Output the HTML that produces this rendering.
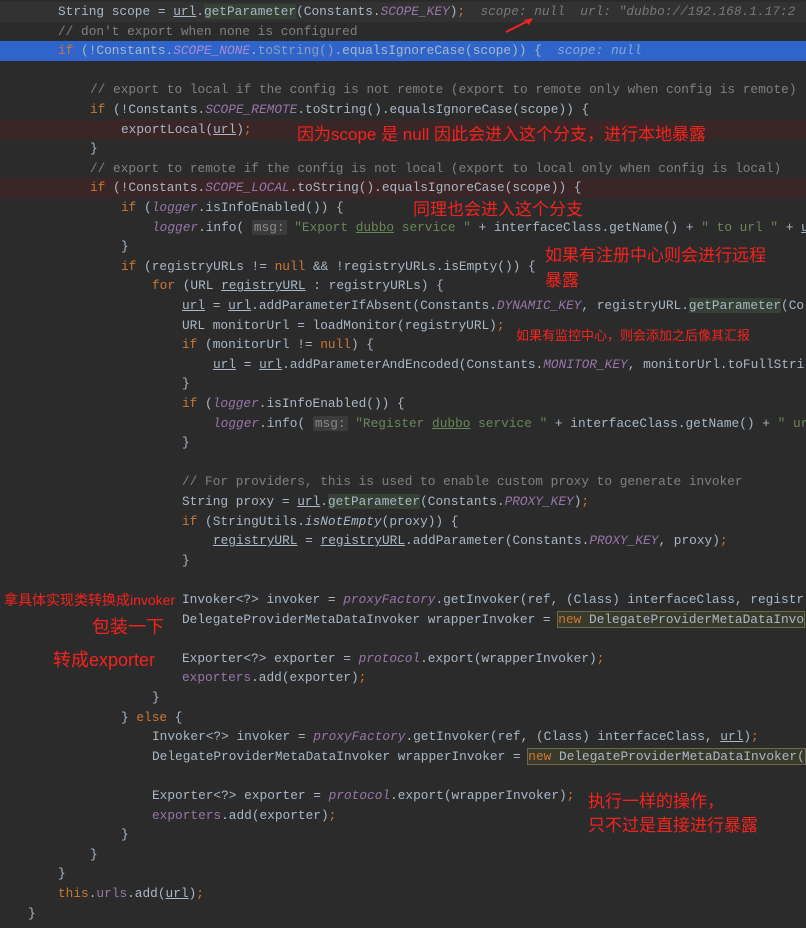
<!DOCTYPE html>
<html><head><meta charset="utf-8"><style>
body{margin:0;width:806px;height:928px;background:#2b2b2b;overflow:hidden;position:relative;font-family:"Liberation Mono",monospace;}
.l{position:absolute;left:0;width:806px;height:19.6px;line-height:19.6px;font-size:12.8px;color:#a9b7c6;white-space:pre;margin-top:1px}
.l span.c{position:absolute;}
.k{color:#cc7832}.cm{color:#808080}.f{color:#9876aa;font-style:italic}.s{color:#6a8759}.m{color:#ffc66d}
.h{color:#787878;font-style:italic}.u{text-decoration:underline}.p{color:#9876aa}
.it{font-style:italic}
.hint{background:#3b3b3b;color:#8a8a8a;border-radius:2px;padding:0 2px}
.a{position:absolute;color:#f5231e;font-family:"Liberation Sans","Noto Sans CJK SC",sans-serif;white-space:nowrap;}
.new{background:#3a3a2c;outline:1px solid #6b6b45}
</style></head><body>
<div class="l" style="top:1px;background:#323232"><span class="c" style="left:58px">String scope = <span class="u">url</span>.<span style="background:#344134">getParameter</span>(Constants.<span class="f">SCOPE_KEY</span>)<span class="k">;</span>  <span class="h">scope: null  url: "dubbo://192.168.1.17:2</span></span></div>
<div class="l" style="top:20.6px"><span class="c cm" style="left:58px">// don't export when none is configured</span></div>
<div class="l" style="top:40.2px;background:#2f65ca"><span class="c" style="left:58px"><span class="k">if</span> (!Constants.<span class="f" style="color:#a98ad0">SCOPE_NONE</span>.<span style="color:#8d9fb8">toString()</span>.equalsIgnoreCase(scope)) {  <span class="h" style="color:#8aa6d8">scope: null</span></span></div>
<div class="l" style="top:79.4px"><span class="c cm" style="left:90px">// export to local if the config is not remote (export to remote only when config is remote)</span></div>
<div class="l" style="top:99px"><span class="c" style="left:90px"><span class="k">if</span> (!Constants.<span class="f">SCOPE_REMOTE</span>.toString().equalsIgnoreCase(scope)) {</span></div>
<div class="l" style="top:118.6px;background:#3a2626"><span class="c" style="left:121px">exportLocal(<span class="u">url</span>)<span class="k">;</span></span></div>
<div class="l" style="top:138.2px"><span class="c" style="left:90px">}</span></div>
<div class="l" style="top:157.8px"><span class="c cm" style="left:90px">// export to remote if the config is not local (export to local only when config is local)</span></div>
<div class="l" style="top:177.4px;background:#3a2626"><span class="c" style="left:90px"><span class="k">if</span> (!Constants.<span class="f">SCOPE_LOCAL</span>.toString().equalsIgnoreCase(scope)) {</span></div>
<div class="l" style="top:197px"><span class="c" style="left:121px"><span class="k">if</span> (<span class="f">logger</span>.isInfoEnabled()) {</span></div>
<div class="l" style="top:216.6px"><span class="c" style="left:152px"><span class="f">logger</span>.info( <span class="hint">msg:</span> <span class="s">"Export <span class="u">dubbo</span> service "</span> + interfaceClass.getName() + <span class="s">" to url "</span> + <span class="u">ur</span></span></div>
<div class="l" style="top:236.2px"><span class="c" style="left:121px">}</span></div>
<div class="l" style="top:255.8px"><span class="c" style="left:121px"><span class="k">if</span> (registryURLs != <span class="k">null</span> &amp;&amp; !registryURLs.isEmpty()) {</span></div>
<div class="l" style="top:275.4px"><span class="c" style="left:152px"><span class="k">for</span> (URL <span class="u">registryURL</span> : registryURLs) {</span></div>
<div class="l" style="top:295px"><span class="c" style="left:182px"><span class="u">url</span> = <span class="u">url</span>.addParameterIfAbsent(Constants.<span class="f">DYNAMIC_KEY</span>, registryURL.<span style="background:#344134">getParameter</span>(Co</span></div>
<div class="l" style="top:314.6px"><span class="c" style="left:182px">URL monitorUrl = loadMonitor(registryURL)<span class="k">;</span></span></div>
<div class="l" style="top:334.2px"><span class="c" style="left:182px"><span class="k">if</span> (monitorUrl != <span class="k">null</span>) {</span></div>
<div class="l" style="top:353.8px"><span class="c" style="left:213px"><span class="u">url</span> = <span class="u">url</span>.addParameterAndEncoded(Constants.<span class="f">MONITOR_KEY</span>, monitorUrl.toFullStri</span></div>
<div class="l" style="top:373.4px"><span class="c" style="left:182px">}</span></div>
<div class="l" style="top:393px"><span class="c" style="left:182px"><span class="k">if</span> (<span class="f">logger</span>.isInfoEnabled()) {</span></div>
<div class="l" style="top:412.6px"><span class="c" style="left:213px"><span class="f">logger</span>.info( <span class="hint">msg:</span> <span class="s">"Register <span class="u">dubbo</span> service "</span> + interfaceClass.getName() + <span class="s">" url</span></span></div>
<div class="l" style="top:432.2px"><span class="c" style="left:182px">}</span></div>
<div class="l" style="top:471.4px"><span class="c cm" style="left:182px">// For providers, this is used to enable custom proxy to generate invoker</span></div>
<div class="l" style="top:491px"><span class="c" style="left:182px">String proxy = <span class="u">url</span>.<span style="background:#344134">getParameter</span>(Constants.<span class="f">PROXY_KEY</span>)<span class="k">;</span></span></div>
<div class="l" style="top:510.6px"><span class="c" style="left:182px"><span class="k">if</span> (StringUtils.<span class="it">isNotEmpty</span>(proxy)) {</span></div>
<div class="l" style="top:530.2px"><span class="c" style="left:213px"><span class="u">registryURL</span> = <span class="u">registryURL</span>.addParameter(Constants.<span class="f">PROXY_KEY</span>, proxy)<span class="k">;</span></span></div>
<div class="l" style="top:549.8px"><span class="c" style="left:182px">}</span></div>
<div class="l" style="top:589px"><span class="c" style="left:182px">Invoker&lt;?&gt; invoker = <span class="f">proxyFactory</span>.getInvoker(ref, (Class) interfaceClass, registr</span></div>
<div class="l" style="top:608.6px"><span class="c" style="left:182px">DelegateProviderMetaDataInvoker wrapperInvoker = <span class="new"><span class="k">new</span> DelegateProviderMetaDataInvo</span></span></div>
<div class="l" style="top:647.8px"><span class="c" style="left:182px">Exporter&lt;?&gt; exporter = <span class="f">protocol</span>.export(wrapperInvoker)<span class="k">;</span></span></div>
<div class="l" style="top:667.4px"><span class="c" style="left:182px"><span class="p">exporters</span>.add(exporter)<span class="k">;</span></span></div>
<div class="l" style="top:687px"><span class="c" style="left:152px">}</span></div>
<div class="l" style="top:706.6px"><span class="c" style="left:121px">} <span class="k">else</span> {</span></div>
<div class="l" style="top:726.2px"><span class="c" style="left:152px">Invoker&lt;?&gt; invoker = <span class="f">proxyFactory</span>.getInvoker(ref, (Class) interfaceClass, <span class="u">url</span>)<span class="k">;</span></span></div>
<div class="l" style="top:745.8px"><span class="c" style="left:152px">DelegateProviderMetaDataInvoker wrapperInvoker = <span class="new"><span class="k">new</span> DelegateProviderMetaDataInvoker(</span></span></div>
<div class="l" style="top:785px"><span class="c" style="left:152px">Exporter&lt;?&gt; exporter = <span class="f">protocol</span>.export(wrapperInvoker)<span class="k">;</span></span></div>
<div class="l" style="top:804.6px"><span class="c" style="left:152px"><span class="p">exporters</span>.add(exporter)<span class="k">;</span></span></div>
<div class="l" style="top:824.2px"><span class="c" style="left:121px">}</span></div>
<div class="l" style="top:843.8px"><span class="c" style="left:90px">}</span></div>
<div class="l" style="top:863.4px"><span class="c" style="left:58px">}</span></div>
<div class="l" style="top:883px"><span class="c" style="left:58px"><span class="k">this</span>.<span class="p">urls</span>.add(<span class="u">url</span>)<span class="k">;</span></span></div>
<div class="l" style="top:902.6px"><span class="c" style="left:28px">}</span></div>

<svg style="position:absolute;left:500px;top:14px" width="40" height="22"><path d="M6 18 L30 6" stroke="#f5231e" stroke-width="2"/><path d="M33 4 L24 6 L29 11 Z" fill="#f5231e"/></svg>

<div class="a" style="left:297px;top:120px;font-size:17px">因为scope 是 null 因此会进入这个分支，进行本地暴露</div>
<div class="a" style="left:413px;top:195px;font-size:17px">同理也会进入这个分支</div>
<div class="a" style="left:545px;top:241px;font-size:17px">如果有注册中心则会进行远程</div>
<div class="a" style="left:545px;top:266px;font-size:17px">暴露</div>
<div class="a" style="left:516px;top:325px;font-size:13px">如果有监控中心，则会添加之后像其汇报</div>
<div class="a" style="left:4px;top:590px;font-size:14px">拿具体实现类转换成invoker</div>
<div class="a" style="left:92px;top:613px;font-size:18px">包装一下</div>
<div class="a" style="left:53px;top:646px;font-size:18px">转成exporter</div>
<div class="a" style="left:588px;top:787px;font-size:17px">执行一样的操作，</div>
<div class="a" style="left:588px;top:811px;font-size:17px">只不过是直接进行暴露</div>
</body></html>
